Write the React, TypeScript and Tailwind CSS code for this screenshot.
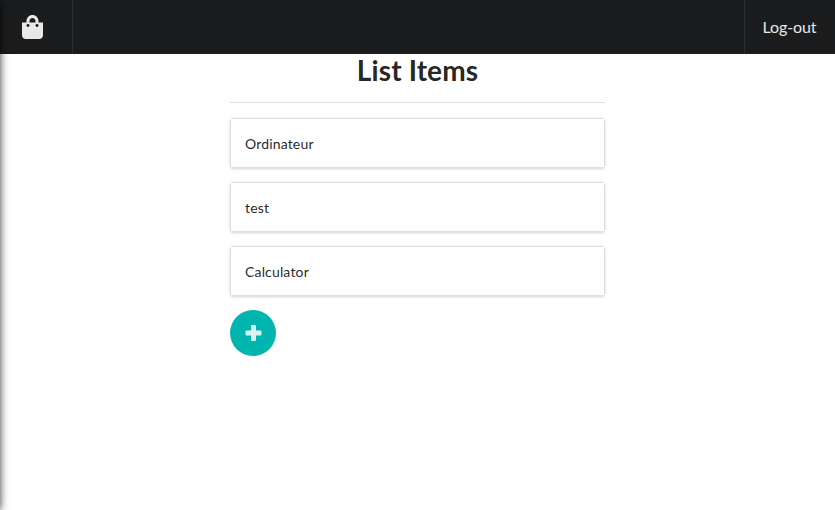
const items = ["Ordinateur", "test", "Calculator"];

export default function App() {
  return (
    <div className="relative h-[510px] overflow-hidden bg-white text-[14px] leading-[20px] text-[rgba(0,0,0,0.87)] font-['Lato','Liberation_Sans',sans-serif]">
      <nav className="flex h-[54px] justify-between bg-[#1b1c1d] text-white/90">
        <a className="flex w-[73px] items-center border-r border-white/[0.08] pl-[22px]">
          <svg width="21" height="24" viewBox="0 0 448 512" fill="currentColor">
            <path d="M352 160v-32C352 57.42 294.579 0 224 0 153.42 0 96 57.42 96 128v32H0v272c0 44.183 35.817 80 80 80h288c44.183 0 80-35.817 80-80V160h-96zm-192-32c0-35.29 28.71-64 64-64s64 28.71 64 64v32H160v-32z" />
            <circle cx="128" cy="224" r="31" fill="#1b1c1d" />
            <circle cx="320" cy="224" r="31" fill="#1b1c1d" />
          </svg>
        </a>
        <a className="flex w-[91px] items-center border-l border-white/[0.08] pl-[17.5px] text-[16px] tracking-[-0.1px]">Log-out</a>
      </nav>
      <div className="absolute top-0 -left-5 h-full w-5 shadow-[0_0_8px_rgba(0,0,0,0.8)]" />
      <main className="mx-auto w-[375px]">
        <h1 className="h-[48px] text-center text-[28px] leading-[32px] font-bold tracking-[0.12px]">List Items</h1>
        <hr className="mb-[15px] border-t border-[#22242626]" />
        <div className="flex flex-col gap-[14px]">
          {items.map((item) => (
            <div key={item} className="h-[50px] rounded-[4px] bg-[#dededf] p-px tracking-[0.16px] shadow-[0_1px_3px_0_#d4d4d5]">
              <div className="h-full bg-white px-[14px] py-[15px]">{item}</div>
            </div>
          ))}
        </div>
        <button className="mt-[14px] flex h-[46px] w-[46px] items-center justify-center rounded-full bg-[#00b5ad] text-white/85">
          <svg width="18" height="16" viewBox="-1.5 0 18 16" fill="currentColor">
            <path d="M6.500 0h3q1 0 1 1v4.500H15q1 0 1 1v3q0 1-1 1h-4.500V15q0 1-1 1h-3q-1 0-1-1v-4.500H1q-1 0-1-1v-3q0-1 1-1h4.500V1q0-1 1-1z" />
          </svg>
        </button>
      </main>
    </div>
  );
}
